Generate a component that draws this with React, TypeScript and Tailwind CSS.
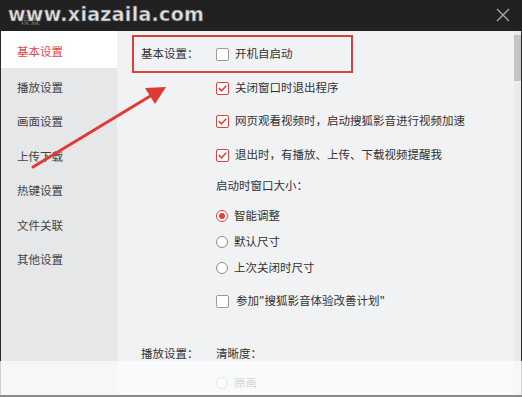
const font = { fontFamily: '"Microsoft YaHei", "Noto Sans CJK SC", "Noto Sans", sans-serif' };

const Checkbox = ({ checked }: { checked: boolean }) =>
  checked ? (
    <span className="w-[13px] h-[13px] border border-[#d9453f] bg-white rounded-[2px] flex items-center justify-center">
      <svg width="9" height="7" viewBox="0 0 9 7" fill="none">
        <path d="M0.8 3.2 L3.5 5.8 L8.2 0.8" stroke="#d9453f" strokeWidth="1.6" />
      </svg>
    </span>
  ) : (
    <span className="w-[13px] h-[13px] border border-[#9a9a9a] bg-white rounded-[2px]" />
  );

const Radio = ({ checked }: { checked: boolean }) => (
  <span
    className={`w-[12px] h-[12px] rounded-full border bg-white flex items-center justify-center ${checked ? 'border-[#d9453f]' : 'border-[#8c8c8c]'}`}
  >
    {checked && <span className="w-[6px] h-[6px] rounded-full bg-[#d9453f]" />}
  </span>
);

const menu = ['基本设置', '播放设置', '画面设置', '上传下载', '热键设置', '文件关联', '其他设置'];

export default function App() {
  return (
    <div className="w-[522px] h-[397px] relative overflow-hidden flex flex-col bg-[#f1f2f4] text-[11.5px] text-[#333]" style={font}>
      {/* title bar */}
      <div className="h-[31px] bg-[#212121] flex items-center justify-between pl-[8px] pr-[12px] relative">
        <span className="absolute left-[20px] top-[15px] text-[10px] leading-none text-[#6a6a6a]">设置</span>
        <span
          className="relative text-[19px] font-black tracking-[0.3px] text-[#dedede] leading-none mt-[-2px]"
          style={{ fontFamily: '"DejaVu Sans", "Liberation Sans", sans-serif', WebkitTextStroke: '0.5px #555' }}
        >
          www.xiazaila.com
        </span>
        <svg width="14" height="14" viewBox="0 0 14 14" className="mt-[-2px]">
          <path d="M1 1 L13 13 M13 1 L1 13" stroke="#a8a8a8" strokeWidth="1.4" />
        </svg>
      </div>

      <div className="flex flex-1 border-l-[1.5px] border-r-[1.5px] border-[#2a2a2a]">
        {/* sidebar */}
        <div className="w-[116px] bg-[#e6e7e9] flex flex-col">
          {menu.map((m, i) => (
            <div
              key={m}
              className={`flex items-center pl-[16px] pt-[4px] ${i === 0 ? 'h-[37px] bg-white text-[#e0494a]' : 'h-[34.5px] text-[#444]'}`}
            >
              {m}
            </div>
          ))}
        </div>

        {/* content */}
        <div className="flex-1 flex flex-col pt-[13px]">
          <div className="h-[20px] flex items-center">
            <span className="w-[99px] pl-[24px]">基本设置：</span>
            <Checkbox checked={false} />
            <span className="ml-[6px]">开机自启动</span>
          </div>
          <div className="h-[20px] flex items-center mt-[14px] pl-[99px]">
            <Checkbox checked />
            <span className="ml-[6px]">关闭窗口时退出程序</span>
          </div>
          <div className="h-[20px] flex items-center mt-[13px] pl-[99px]">
            <Checkbox checked />
            <span className="ml-[6px]">网页观看视频时，启动搜狐影音进行视频加速</span>
          </div>
          <div className="h-[20px] flex items-center mt-[14px] pl-[99px]">
            <Checkbox checked />
            <span className="ml-[6px]">退出时，有播放、上传、下载视频提醒我</span>
          </div>
          <div className="h-[20px] flex items-center mt-[11px] pl-[99px]">启动时窗口大小：</div>
          <div className="h-[20px] flex items-center mt-[10px] pl-[99px]">
            <Radio checked />
            <span className="ml-[6px]">智能调整</span>
          </div>
          <div className="h-[20px] flex items-center mt-[6px] pl-[99px]">
            <Radio checked={false} />
            <span className="ml-[6px]">默认尺寸</span>
          </div>
          <div className="h-[20px] flex items-center mt-[6px] pl-[99px]">
            <Radio checked={false} />
            <span className="ml-[6px]">上次关闭时尺寸</span>
          </div>
          <div className="h-[20px] flex items-center mt-[13px] pl-[99px]">
            <Checkbox checked={false} />
            <span className="ml-[7px]">参加"搜狐影音体验改善计划"</span>
          </div>
          <div className="h-[20px] flex items-center mt-[33px]">
            <span className="w-[99px] pl-[24px]">播放设置：</span>
            <span>清晰度：</span>
          </div>
          <div className="h-[20px] flex items-center mt-[9px] pl-[99px]">
            <Radio checked={false} />
            <span className="ml-[6px]">原画</span>
          </div>
        </div>

        {/* scrollbar */}
        <div className="w-[7px] bg-[#eaebed] flex flex-col">
          <div className="h-[46px] mt-[4px] bg-[#c4c4c4]" />
        </div>
      </div>

      {/* faded bottom bar */}
      <div className="absolute left-0 right-0 top-[361px] h-[34px] bg-[#fafbfc]/80" />
      <div className="absolute left-0 right-0 bottom-0 h-[2px] bg-[#8a8a8a]" />

      {/* annotation box */}
      <div className="absolute left-[132px] top-[35px] w-[221px] h-[38px] border-[2.5px] border-[#d8403e]" />

      {/* annotation arrow */}
      <svg className="absolute left-0 top-0" width="522" height="397" viewBox="0 0 522 397">
        <path d="M33 167 L152 95" stroke="#e03a35" strokeWidth="3" strokeLinecap="round" />
        <path d="M166 87 L145 88 L155 104 Z" fill="#e03a35" />
      </svg>
    </div>
  );
}
